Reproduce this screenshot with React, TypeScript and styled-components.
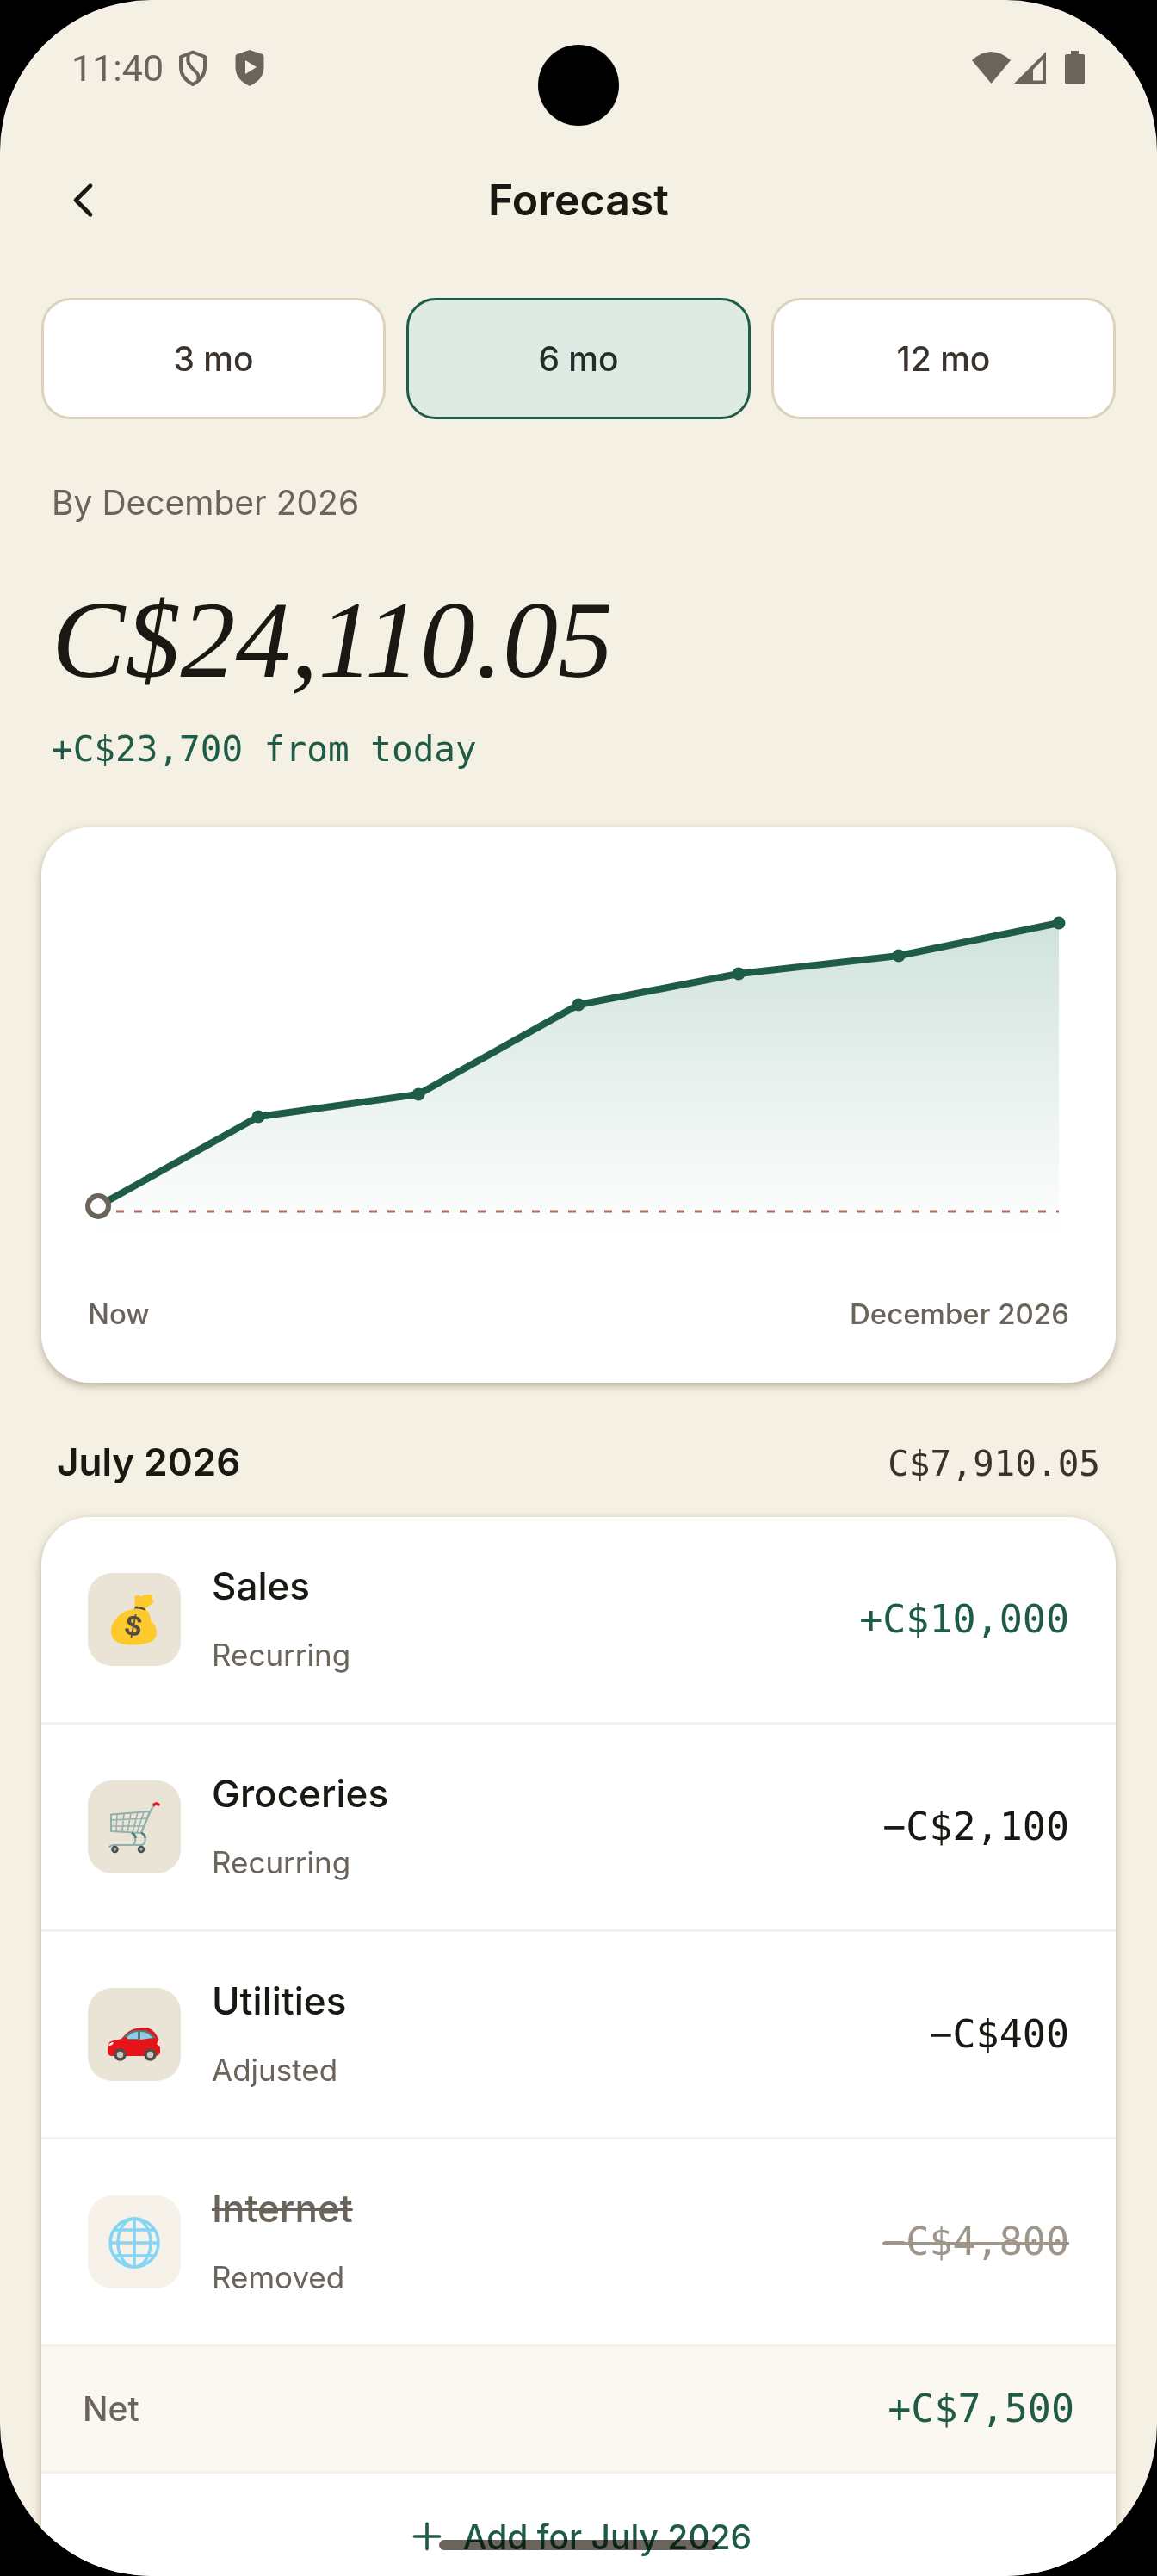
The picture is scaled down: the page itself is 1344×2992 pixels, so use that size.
import React, { useState } from "react";
import styled, { createGlobalStyle } from "styled-components";
import { ChevronLeft, Plus } from "lucide-react";

const sans = `Inter, "Liberation Sans", sans-serif`;
const mono = `"DejaVu Sans Mono", "Liberation Mono", monospace`;

const GlobalStyle = createGlobalStyle`
  * {
    box-sizing: border-box;
  }
  body {
    margin: 0;
    background: #000000;
    font-family: ${sans};
    color: #1a1813;
  }
  button {
    font-family: inherit;
    cursor: pointer;
  }
`;

const Screen = styled.div`
  position: relative;
  height: 100vh;
  overflow: hidden;
  border-radius: 176px;
  background: #f5f0e4;
`;
const StatusBar = styled.div`
  display: flex;
  align-items: center;
  justify-content: space-between;
  height: 158px;
  padding: 0 83px;
  color: #6b645b;
`;
const StatusGroup = styled.div`
  display: flex;
  align-items: center;
`;
const Clock = styled.span`
  margin-right: 17px;
  font: 400 43px/48px Roboto, sans-serif;
`;
const Camera = styled.div`
  position: absolute;
  top: 52px;
  left: 50%;
  width: 94px;
  height: 94px;
  margin-left: -47px;
  border-radius: 50%;
  background: #000000;
`;
const Header = styled.header`
  display: grid;
  grid-template-columns: 96px 1fr 96px;
  align-items: center;
  height: 148px;
  padding: 0 48px;
`;
const BackButton = styled.button`
  display: flex;
  align-items: center;
  justify-content: center;
  width: 96px;
  height: 96px;
  padding: 0;
  border: none;
  background: none;
  color: #1a1813;
`;
const Title = styled.h1`
  margin: 0;
  text-align: center;
  font-size: 50px;
  line-height: 60px;
  font-weight: 600;
`;
const Main = styled.main`
  padding: 40px 48px 0;
`;
const Ranges = styled.div`
  display: grid;
  grid-template-columns: repeat(3, 1fr);
  gap: 24px;
`;
const RangeButton = styled.button<{ $active: boolean }>`
  height: 141px;
  border: 3px solid ${(p) => (p.$active ? "#1f5c47" : "#dcd2bc")};
  border-radius: 34px;
  background: ${(p) => (p.$active ? "#deeae4" : "#ffffff")};
  color: ${(p) => (p.$active ? "#1f2f28" : "#3a332d")};
  font-size: 39px;
  font-weight: 500;
`;
const Summary = styled.section`
  padding: 69px 12px 63px;
`;
const SummaryLabel = styled.p`
  margin: 0;
  font-size: 39px;
  line-height: 56px;
  color: #6b645b;
`;
const Total = styled.p`
  margin: 0;
  padding: 36px 0 4px;
  font: italic 400 128px/190px "Liberation Serif", serif;
`;
const Change = styled.p`
  margin: 0;
  font: 400 41px/56px ${mono};
  color: #1f5c47;
`;
const Card = styled.section`
  overflow: hidden;
  border-radius: 56px;
  background: #ffffff;
`;
const CardShadow = styled.div`
  border-radius: 56px;
  box-shadow: 0 4px 8px rgba(60, 45, 25, 0.26), 0 2px 16px rgba(90, 75, 30, 0.1);
`;
const Chart = styled.svg`
  display: block;
  width: 100%;
`;
const ChartLabels = styled.div`
  display: flex;
  justify-content: space-between;
  padding: 0 54px 56px;
  font-size: 33px;
  line-height: 48px;
  font-weight: 500;
  color: #6b645b;
`;
const MonthHeader = styled.div`
  display: flex;
  align-items: baseline;
  justify-content: space-between;
  padding: 62px 18px 32px;
`;
const MonthName = styled.h2`
  margin: 0;
  font-size: 44px;
  line-height: 60px;
  font-weight: 600;
`;
const MonthBalance = styled.span`
  font: 400 41px/60px ${mono};
  color: #3a332d;
`;
const List = styled.ul`
  margin: 0;
  padding: 0;
  list-style: none;
`;
const Row = styled.li`
  display: flex;
  align-items: center;
  gap: 36px;
  height: 241px;
  padding: 0 54px;
  border-bottom: 3px solid #f5f1ea;
`;
const Tile = styled.span<{ $removed?: boolean }>`
  display: flex;
  align-items: center;
  justify-content: center;
  width: 108px;
  height: 108px;
  border-radius: 28px;
  background: ${(p) => (p.$removed ? "#f6f2e9" : "#eae4d6")};
`;
const RowText = styled.div`
  display: flex;
  flex: 1;
  flex-direction: column;
  align-items: flex-start;
  gap: 22px;
`;
const RowName = styled.span<{ $removed?: boolean }>`
  font-size: 44px;
  line-height: 60px;
  font-weight: 500;
  color: ${(p) => (p.$removed ? "#6b645b" : "#1a1813")};
  text-decoration: ${(p) => (p.$removed ? "line-through 3px" : "none")};
`;
const RowNote = styled.span`
  font-size: 35px;
  line-height: 56px;
  color: #6b645b;
`;
const amountColors = { in: "#1f5c47", out: "#1a1813", removed: "#a0958b" };
const Amount = styled.span<{ $kind: keyof typeof amountColors }>`
  font: 400 45px/60px ${mono};
  color: ${(p) => amountColors[p.$kind]};
  text-decoration: ${(p) =>
    p.$kind === "removed" ? "line-through 3px" : "none"};
`;
const NetRow = styled.div`
  display: flex;
  align-items: center;
  justify-content: space-between;
  height: 147px;
  padding: 0 48px;
  border-bottom: 3px solid #f5f1ea;
  background: #fbf8f1;
`;
const NetLabel = styled.span`
  font-size: 39px;
  line-height: 60px;
  font-weight: 500;
  color: #6b645b;
`;
const AddButton = styled.button`
  display: flex;
  align-items: center;
  justify-content: center;
  gap: 17px;
  width: 100%;
  height: 146px;
  padding: 0;
  border: none;
  background: none;
  color: #1f5c47;
  font-size: 39px;
  font-weight: 500;
`;
const HomeIndicator = styled.div`
  position: absolute;
  bottom: 30px;
  left: 50%;
  width: 324px;
  height: 12px;
  margin-left: -162px;
  border-radius: 6px;
  background: #6b645b;
  mix-blend-mode: multiply;
`;

const StatusIconsLeft = () => (
  <svg width="100" height="42" viewBox="0 0 100 42" aria-hidden="true">
    <path
      d="M17 2.500 31 8v12c0 9-5.500 15.500-14 20C8.500 35.500 3 29 3 20V8z"
      fill="none"
      stroke="currentColor"
      strokeWidth="4"
      strokeLinejoin="round"
    />
    <path
      d="M12 5c-2 9 0 12 5 17s8 7 6 13"
      fill="none"
      stroke="currentColor"
      strokeWidth="4"
    />
    <path
      d="M83 0 98 5q1.500 1 1.500 3v12c0 10-6 17-16.500 22C72.500 37 66.500 30 66.500 20V8q0-2 1.500-3zM78 12v16l13-8z"
      fill="currentColor"
      fillRule="evenodd"
    />
  </svg>
);

const StatusIconsRight = () => (
  <svg width="132" height="40" viewBox="0 0 132 40" aria-hidden="true">
    <path d="M0 11Q22-9 45 11L22.500 38z" fill="currentColor" />
    <path
      d="M86 1v37H49zm-3.500 9L71 22v12.500h11.500z"
      fill="currentColor"
      fillRule="evenodd"
    />
    <path
      d="M115 0h9v4h5q2 0 2 2v31q0 2-2 2h-19q-2 0-2-2V6q0-2 2-2h5z"
      fill="currentColor"
    />
  </svg>
);

const MoneyBag = () => (
  <svg width="64" height="64" viewBox="0 0 64 64" aria-hidden="true">
    <path
      d="M32 17c1-3 1-6 0-11 2-3 6-3 8 0 3-4 10-4 13-2 0 2-1 4-1 5 2 0 3 1 3 3-4 2-8 6-10 8z"
      fill="#fdc92b"
    />
    <path
      d="M32 20h13c4 3 6 8 6 14 4 2 7 8 7 13 0 9-8 14-25 14.500C14 62 5 57 5 46c0-12 12-25 27-26z"
      fill="#fdc92b"
    />
    <path d="M33 17c4-1 9 0 12 3v2c-4-2-9-3-13-2z" fill="#544a46" />
    <text
      x="31"
      y="51"
      textAnchor="middle"
      fontFamily="Liberation Sans"
      fontSize="34"
      fontWeight="700"
      fill="#544a46"
      transform="rotate(11 31 40)"
    >
      $
    </text>
  </svg>
);

const Cart = () => (
  <svg width="64" height="64" viewBox="0 0 64 64" fill="none" aria-hidden="true">
    <g stroke="#90b0af" strokeWidth="2" strokeLinecap="round">
      <path d="M5 17.500 50 14 40 39 5 37z" strokeLinejoin="round" />
      <path d="M5 24 46 22M5 31l38 0M12 17l-1 20M20 16l-2 21M28 16l-4 22M36 15l-6 23M43 15l-8 24" strokeWidth="1.500" />
      <path d="M40 39 51 13q3-6 8-8M41 39c5 5 5 11 0 14H9q-4 0-6 2" />
      <path d="M29 39c5 5 6 11 1 14" />
    </g>
    <path d="M29 39q4 1 5 6M40 39q4 1 5 6" stroke="#46796d" strokeWidth="2" />
    <path d="M55 6q2-2 5 0" stroke="#dc1c22" strokeWidth="3.500" strokeLinecap="round" />
    <g fill="#70c4dd" stroke="#554c48" strokeWidth="2.500">
      <circle cx="9.500" cy="58" r="3" />
      <circle cx="40" cy="58" r="3" />
    </g>
  </svg>
);

const Car = () => (
  <svg width="64" height="64" viewBox="0 0 64 64" aria-hidden="true">
    <path
      d="M1 52c0-7 1-11 4-12l12-3c7-8 12-13 26-13 9 0 13 5 17 13 2 4 2 10 2 15 0 4-4 5-7 5H7c-4 0-6-2-6-5z"
      fill="#e41418"
    />
    <path d="M17 38c7-8 12-11 20-11h3c9 0 13 5 17 9l-20 2z" fill="#4d7f76" />
    <path d="M22 37c4-5 9-8 14-8v8zM39 29c7 0 11 3 14 7l-14 2z" fill="#92cde8" />
    <path d="M2 45c1-3 3-4 6-4-1 3-3 4-6 4zM58 43c1-2 2-4 3-4l1 7z" fill="#ffffff" />
    <path d="M17 38q3-4 7-2l-1 3z" fill="#e41418" />
    <g fill="#c9c6bf" stroke="#554c48" strokeWidth="3.500">
      <circle cx="15.500" cy="55.500" r="5.500" />
      <circle cx="50.500" cy="55.500" r="5.500" />
    </g>
  </svg>
);

const Globe = () => (
  <svg width="64" height="64" viewBox="0 0 64 64" aria-hidden="true">
    <g fill="none" stroke="#84d4f6" strokeWidth="3.500">
      <circle cx="32" cy="33" r="28" />
      <ellipse cx="32" cy="33" rx="19" ry="28" />
      <path d="M32 5v56M4 33h56M9 18h46M9 48h46" />
    </g>
  </svg>
);

const points = [
  [66, 440],
  [252, 336],
  [438, 310],
  [624, 206],
  [810, 170],
  [996, 149],
  [1182, 111],
];
const line = points.map((p) => p.join(",")).join(" ");

const BalanceChart = () => (
  <Chart viewBox="0 0 1248 541" role="img" aria-label="Forecast balance">
    <defs>
      <linearGradient id="fill" x1="0" y1="0" x2="0" y2="1">
        <stop offset="0" stopColor="#2a7d62" stopOpacity="0.22" />
        <stop offset="1" stopColor="#2a7d62" stopOpacity="0" />
      </linearGradient>
    </defs>
    <polygon points={`66,478 ${line} 1182,478`} fill="url(#fill)" />
    <line
      x1="66"
      y1="446"
      x2="1182"
      y2="446"
      stroke="#b06c62"
      strokeWidth="3"
      strokeDasharray="9 12"
    />
    <polyline
      points={line}
      fill="none"
      stroke="#1f5c47"
      strokeWidth="8"
      strokeLinejoin="round"
    />
    {points.slice(1).map(([x, y]) => (
      <circle key={x} cx={x} cy={y} r="7.500" fill="#1f5c47" />
    ))}
    <circle cx="66" cy="440" r="12" fill="#ffffff" stroke="#6b645b" strokeWidth="6" />
  </Chart>
);

const ranges = ["3 mo", "6 mo", "12 mo"];

type Item = {
  name: string;
  note: string;
  amount: string;
  kind: keyof typeof amountColors;
  icon: React.ReactNode;
};
const items: Item[] = [
  { name: "Sales", note: "Recurring", amount: "+C$10,000", kind: "in", icon: <MoneyBag /> },
  { name: "Groceries", note: "Recurring", amount: "−C$2,100", kind: "out", icon: <Cart /> },
  { name: "Utilities", note: "Adjusted", amount: "−C$400", kind: "out", icon: <Car /> },
  { name: "Internet", note: "Removed", amount: "−C$4,800", kind: "removed", icon: <Globe /> },
];

const App = () => {
  const [range, setRange] = useState("6 mo");

  return (
    <Screen>
      <GlobalStyle />
      <StatusBar>
        <StatusGroup>
          <Clock>11:40</Clock>
          <StatusIconsLeft />
        </StatusGroup>
        <StatusIconsRight />
      </StatusBar>
      <Camera />
      <Header>
        <BackButton aria-label="Back">
          <ChevronLeft size={67} strokeWidth={1.75} />
        </BackButton>
        <Title>Forecast</Title>
      </Header>
      <Main>
        <Ranges>
          {ranges.map((r) => (
            <RangeButton
              key={r}
              $active={r === range}
              aria-pressed={r === range}
              onClick={() => setRange(r)}
            >
              {r}
            </RangeButton>
          ))}
        </Ranges>
        <Summary>
          <SummaryLabel>By December 2026</SummaryLabel>
          <Total>C$24,110.05</Total>
          <Change>+C$23,700 from today</Change>
        </Summary>
        <CardShadow>
          <Card>
            <BalanceChart />
            <ChartLabels>
              <span>Now</span>
              <span>December 2026</span>
            </ChartLabels>
          </Card>
        </CardShadow>
        <MonthHeader>
          <MonthName>July 2026</MonthName>
          <MonthBalance>C$7,910.05</MonthBalance>
        </MonthHeader>
        <CardShadow>
          <Card>
            <List>
              {items.map((item) => (
                <Row key={item.name}>
                  <Tile $removed={item.kind === "removed"}>{item.icon}</Tile>
                  <RowText>
                    <RowName $removed={item.kind === "removed"}>{item.name}</RowName>
                    <RowNote>{item.note}</RowNote>
                  </RowText>
                  <Amount $kind={item.kind}>{item.amount}</Amount>
                </Row>
              ))}
            </List>
            <NetRow>
              <NetLabel>Net</NetLabel>
              <Amount $kind="in">+C$7,500</Amount>
            </NetRow>
            <AddButton>
              <Plus size={50} strokeWidth={1.75} />
              Add for July 2026
            </AddButton>
          </Card>
        </CardShadow>
      </Main>
      <HomeIndicator />
    </Screen>
  );
};
export default App;
